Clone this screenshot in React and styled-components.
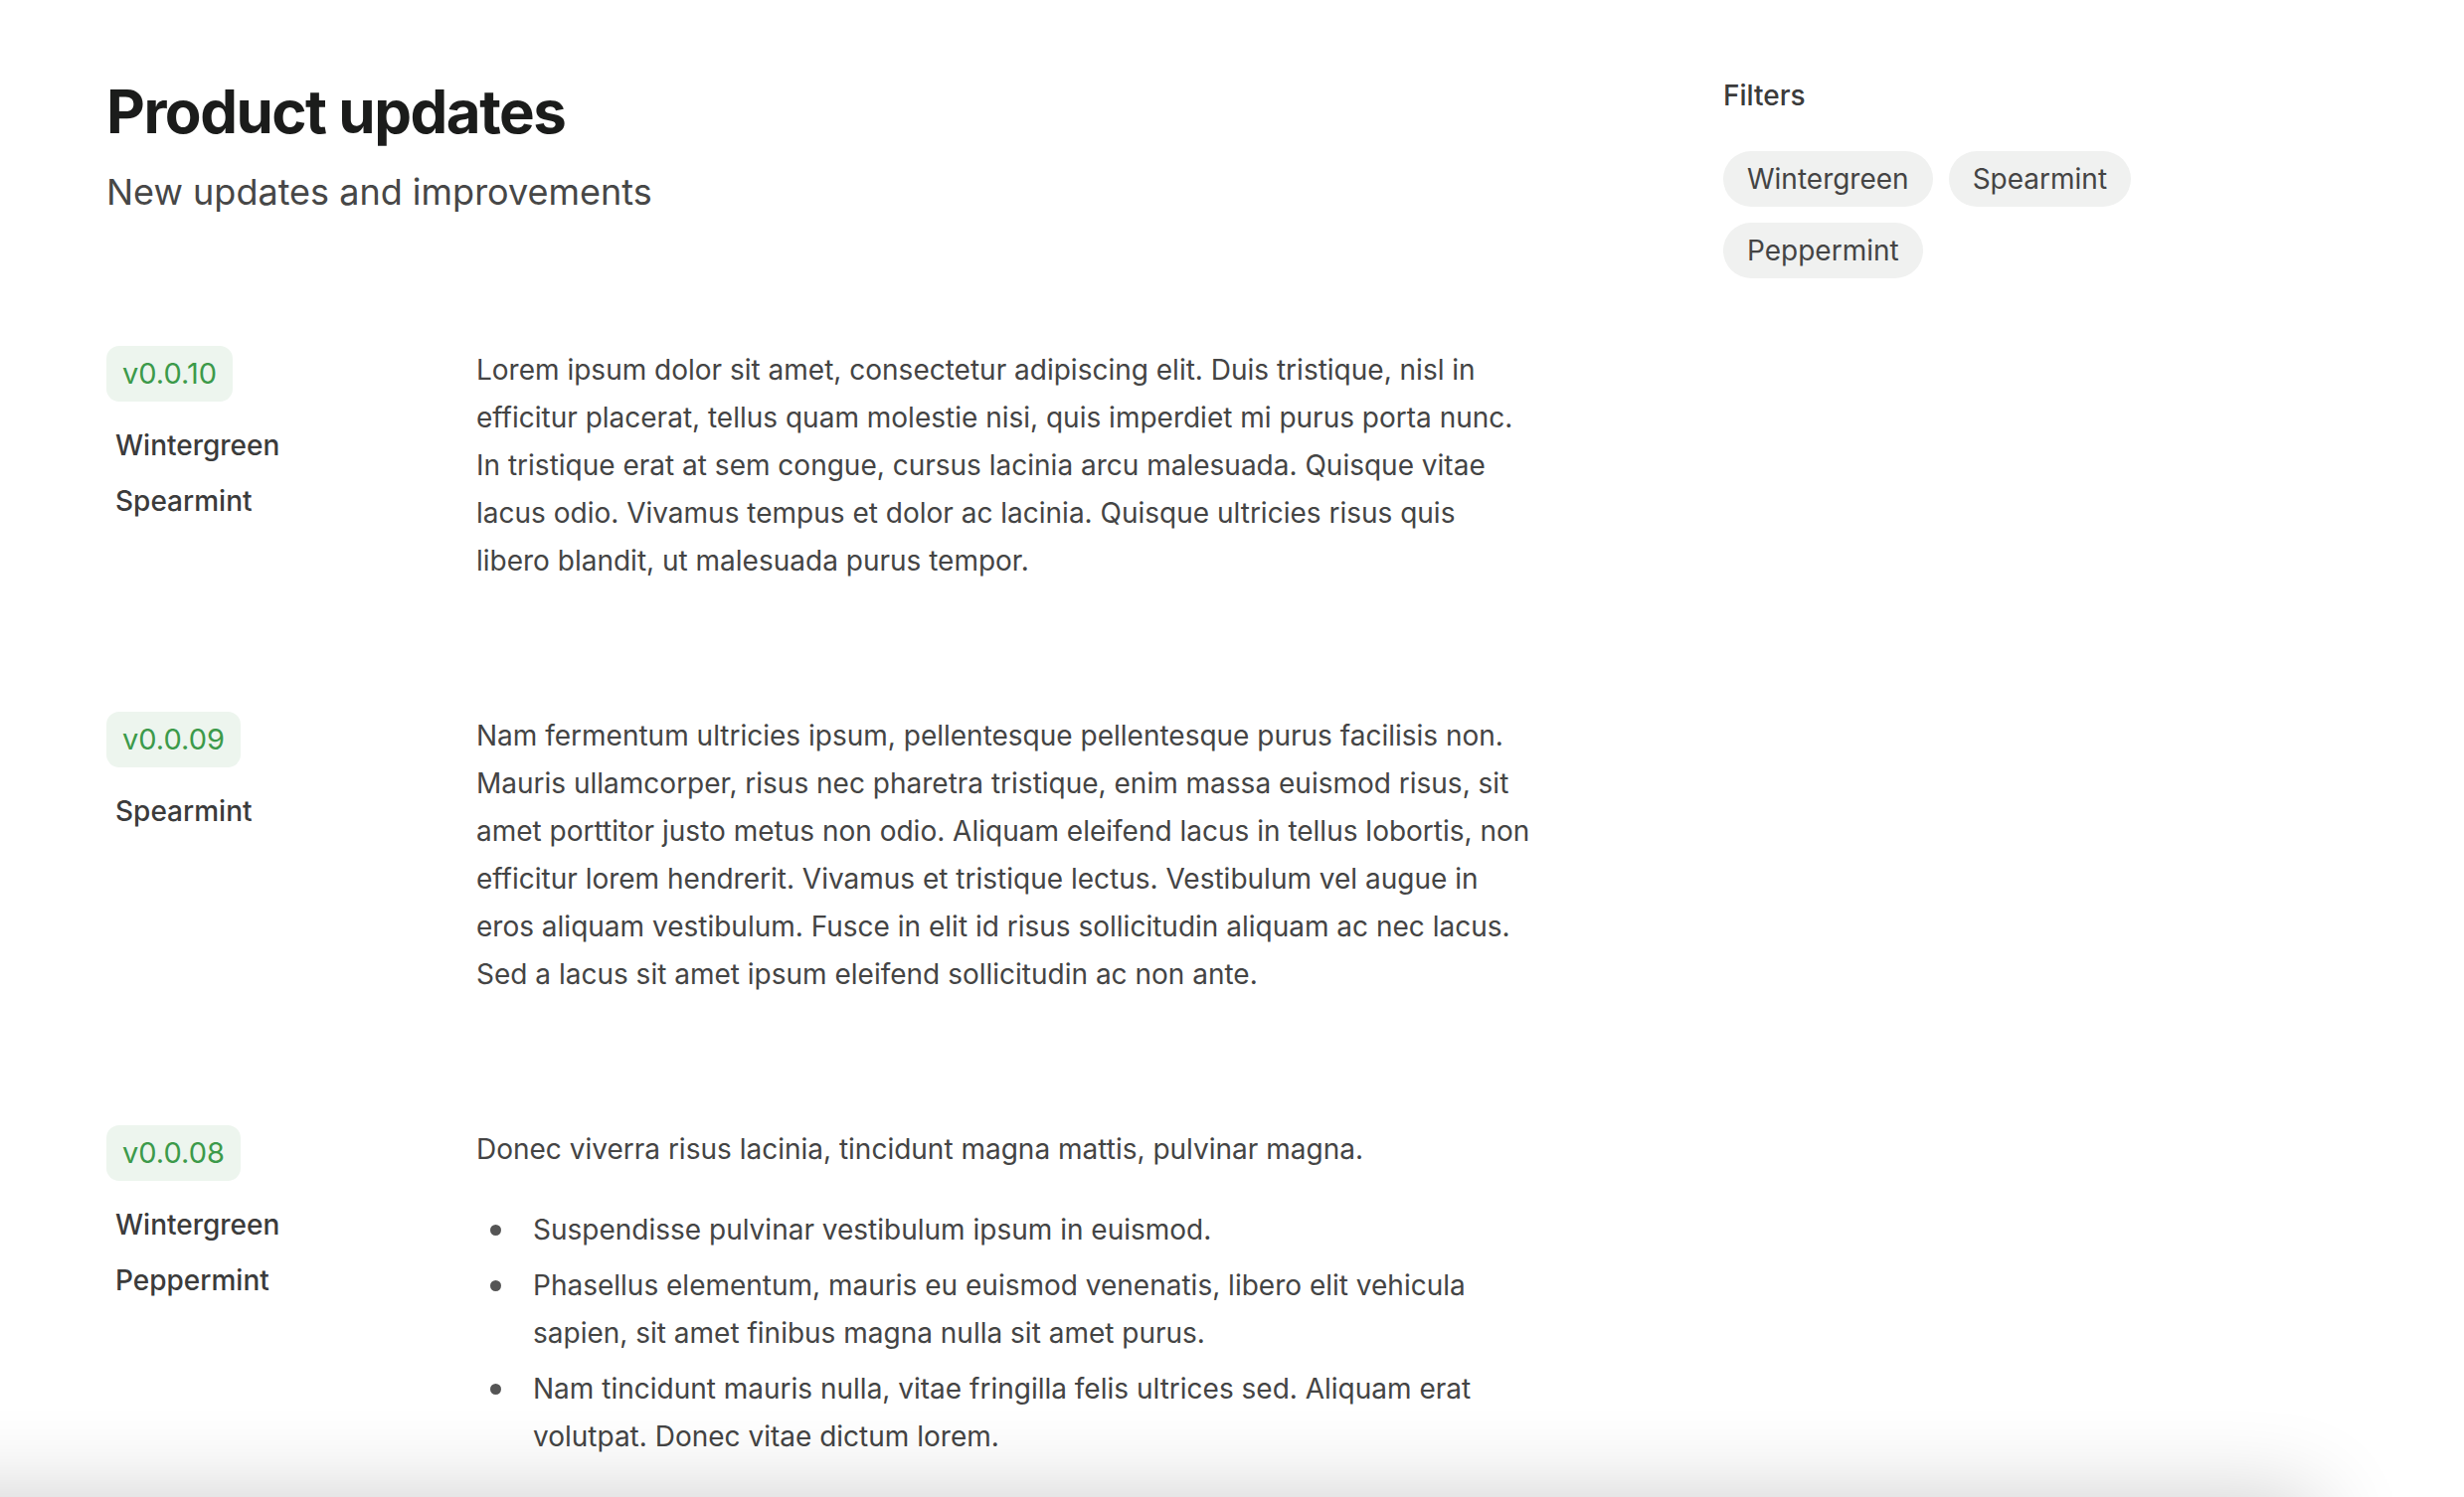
import React from "react";
import styled, { createGlobalStyle } from "styled-components";

const Global = createGlobalStyle`
  html, body { margin: 0; padding: 0; background: #ffffff; }
  body { font-family: Inter, "Noto Sans", "Liberation Sans", sans-serif; color: #444; }
  * { box-sizing: border-box; }
`;

const Page = styled.div`
  display: flex;
  gap: 188px;
  padding: 76px 107px 120px 107px;
  min-height: 1506px;
`;

const Main = styled.main`
  flex: 0 0 1438px;
  display: flex;
  flex-direction: column;
`;

const Title = styled.h1`
  margin: 0;
  font-size: 60px;
  line-height: 72px;
  font-weight: 700;
  letter-spacing: -0.025em;
  color: #1b1c1b;
`;

const Subtitle = styled.p`
  margin: 21px 0 0;
  font-size: 36px;
  line-height: 48px;
  font-weight: 400;
  color: #474747;
`;

const Entries = styled.div`
  display: flex;
  flex-direction: column;
  gap: 128px;
  padding-top: 131px;
`;

const Entry = styled.section`
  display: grid;
  grid-template-columns: 372px 1064px;
  align-items: start;
`;

const Meta = styled.div`
  display: flex;
  flex-direction: column;
  align-items: flex-start;
  gap: 16px;
`;

const Version = styled.span`
  display: inline-block;
  padding: 8px 16px;
  border-radius: 13px;
  background: #edf5ee;
  color: #3c9a4a;
  font-size: 29px;
  line-height: 40px;
  font-weight: 400;
`;

const Tags = styled.ul`
  list-style: none;
  margin: 0;
  padding: 0;
`;

const Tag = styled.li`
  padding: 8px 9px;
  font-size: 28px;
  line-height: 40px;
  font-weight: 500;
  color: #3b3b3b;
`;

const Body = styled.div`
  font-size: 28px;
  line-height: 48px;
  color: #444;
`;

const Para = styled.p`
  margin: 0;
`;

const Bullets = styled.ul`
  list-style: none;
  margin: 33px 0 0;
  padding: 0 0 0 57px;
`;

const Bullet = styled.li`
  position: relative;
  & + & { margin-top: 8px; }
  &::before {
    content: "";
    position: absolute;
    left: -43px;
    top: 19px;
    width: 11px;
    height: 11px;
    border-radius: 50%;
    background: #555;
  }
`;

const Sidebar = styled.aside`
  width: 560px;
  display: flex;
  flex-direction: column;
  gap: 36px;
`;

const SideLabel = styled.div`
  font-size: 28px;
  line-height: 40px;
  font-weight: 500;
  color: #3b3b3b;
`;

const Chips = styled.div`
  display: flex;
  flex-wrap: wrap;
  gap: 16px;
  max-width: 440px;
`;

const Chip = styled.button`
  border: none;
  margin: 0;
  padding: 8px 24px;
  border-radius: 28px;
  background: #f0f1f0;
  color: #444;
  font-family: inherit;
  font-size: 28px;
  line-height: 40px;
  font-weight: 400;
  cursor: pointer;
`;

const BottomShade = styled.div`
  position: fixed;
  left: -200px;
  width: 2530px;
  top: 100%;
  height: 120px;
  box-shadow: 0 0 90px 0 rgba(0, 0, 0, 0.2);
  pointer-events: none;
`;

const entries = [
  {
    version: "v0.0.10",
    tags: ["Wintergreen", "Spearmint"],
    text:
      "Lorem ipsum dolor sit amet, consectetur adipiscing elit. Duis tristique, nisl in efficitur placerat, tellus quam molestie nisi, quis imperdiet mi purus porta nunc. In tristique erat at sem congue, cursus lacinia arcu malesuada. Quisque vitae lacus odio. Vivamus tempus et dolor ac lacinia. Quisque ultricies risus quis libero blandit, ut malesuada purus tempor.",
  },
  {
    version: "v0.0.09",
    tags: ["Spearmint"],
    text:
      "Nam fermentum ultricies ipsum, pellentesque pellentesque purus facilisis non. Mauris ullamcorper, risus nec pharetra tristique, enim massa euismod risus, sit amet porttitor justo metus non odio. Aliquam eleifend lacus in tellus lobortis, non efficitur lorem hendrerit. Vivamus et tristique lectus. Vestibulum vel augue in eros aliquam vestibulum. Fusce in elit id risus sollicitudin aliquam ac nec lacus. Sed a lacus sit amet ipsum eleifend sollicitudin ac non ante.",
  },
  {
    version: "v0.0.08",
    tags: ["Wintergreen", "Peppermint"],
    text: "Donec viverra risus lacinia, tincidunt magna mattis, pulvinar magna.",
    bullets: [
      "Suspendisse pulvinar vestibulum ipsum in euismod.",
      "Phasellus elementum, mauris eu euismod venenatis, libero elit vehicula sapien, sit amet finibus magna nulla sit amet purus.",
      "Nam tincidunt mauris nulla, vitae fringilla felis ultrices sed. Aliquam erat volutpat. Donec vitae dictum lorem.",
    ],
  },
];

export default function App() {
  return (
    <>
      <Global />
      <Page>
        <Main>
          <Title>Product updates</Title>
          <Subtitle>New updates and improvements</Subtitle>
          <Entries>
            {entries.map((e) => (
              <Entry key={e.version}>
                <Meta>
                  <Version>{e.version}</Version>
                  <Tags>
                    {e.tags.map((t) => (
                      <Tag key={t}>{t}</Tag>
                    ))}
                  </Tags>
                </Meta>
                <Body>
                  <Para>{e.text}</Para>
                  {e.bullets && (
                    <Bullets>
                      {e.bullets.map((b) => (
                        <Bullet key={b}>{b}</Bullet>
                      ))}
                    </Bullets>
                  )}
                </Body>
              </Entry>
            ))}
          </Entries>
        </Main>
        <Sidebar>
          <SideLabel>Filters</SideLabel>
          <Chips>
            <Chip>Wintergreen</Chip>
            <Chip>Spearmint</Chip>
            <Chip>Peppermint</Chip>
          </Chips>
        </Sidebar>
      </Page>
      <BottomShade />
    </>
  );
}
